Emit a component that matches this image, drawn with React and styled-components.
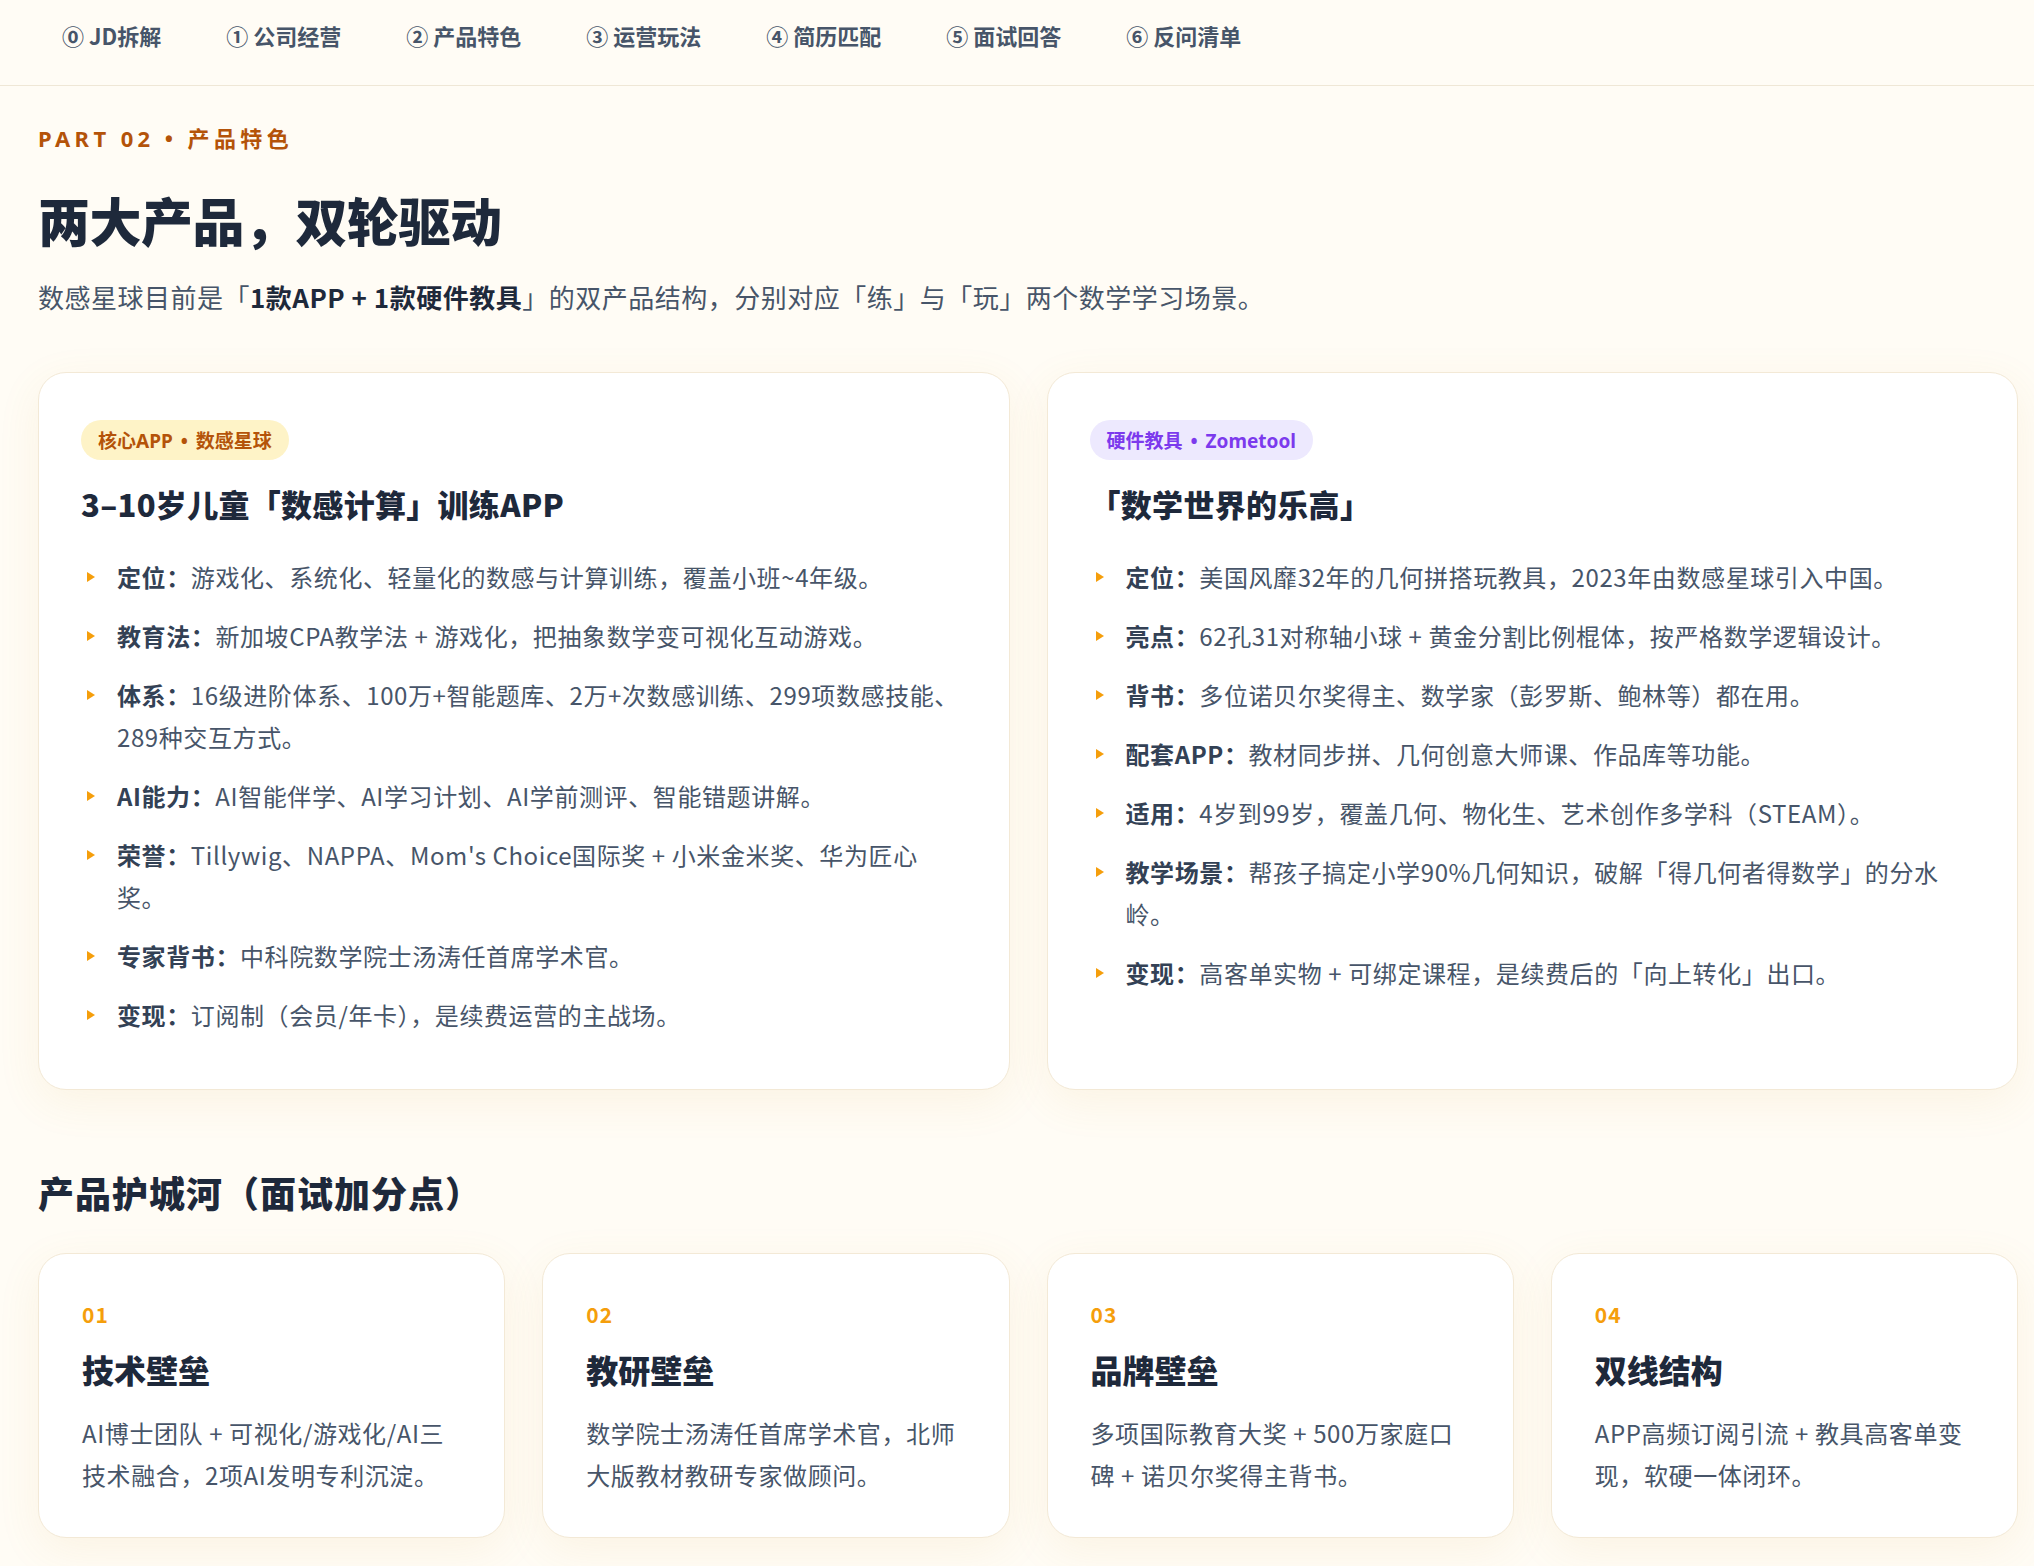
import styled, { createGlobalStyle } from 'styled-components';

const GlobalStyle = createGlobalStyle`
  * { box-sizing: border-box; }
  body {
    margin: 0;
    background: #fffcf5;
    font-family: "Noto Sans CJK SC", "Noto Sans", sans-serif;
    color: #1e293b;
  }
`

const Nav = styled.nav`
  display: flex;
  gap: 17px;
  padding: 18px 0 33px 38px;
  border-bottom: 1px solid #efe7d6;
`

const NavItem = styled.a`
  padding: 0 24px;
  font-size: 22px;
  line-height: 34px;
  font-weight: 700;
  color: #475569;
  text-decoration: none;
  white-space: nowrap;
  cursor: pointer;
`

const Main = styled.main`
  padding: 0 16px 60px 38px;
`

const Eyebrow = styled.div`
  margin-top: 37px;
  font-family: "Noto Sans", "Noto Sans CJK SC", sans-serif;
  font-size: 22px;
  line-height: 30px;
  font-weight: 700;
  letter-spacing: 4.4px;
  color: #b45309;
`

const Title = styled.h1`
  margin: 34px 0 0;
  font-size: 52px;
  line-height: 65px;
  font-weight: 900;
  letter-spacing: -0.5px;
  color: #1e293b;
`

const Lead = styled.p`
  margin: 24px 0 0;
  font-size: 26px;
  line-height: 42px;
  letter-spacing: 0.5px;
  color: #475569;
  b { color: #1e293b; font-weight: 700; }
`

const ProductGrid = styled.div`
  display: grid;
  grid-template-columns: 1fr 1fr;
  gap: 37px;
  margin-top: 54px;
`

const Card = styled.div`
  background: #fff;
  border: 1px solid #f3e9d6;
  border-radius: 28px;
  box-shadow: 0 12px 44px rgba(214, 160, 60, 0.09);
`

const ProductCard = styled(Card)`
  padding: 47px 42px 53px;
`

const Badge = styled.span`
  display: inline-flex;
  align-items: center;
  height: 40px;
  padding: 0 17px;
  border-radius: 20px;
  font-family: "Noto Sans", "Noto Sans CJK SC", sans-serif;
  font-size: 19px;
  font-weight: 700;
  word-spacing: 3px;
  background: ${p => p.$tone === 'purple' ? '#ede9fe' : '#fef3c7'};
  color: ${p => p.$tone === 'purple' ? '#7c3aed' : '#b45309'};
`

const CardTitle = styled.h3`
  margin: 22px 0 0;
  font-size: 31px;
  line-height: 44px;
  font-weight: 800;
  letter-spacing: 0.3px;
  color: #1e293b;
`

const List = styled.ul`
  list-style: none;
  margin: 30px 0 0;
  padding: 0;
  display: flex;
  flex-direction: column;
  gap: 17px;
`

const Item = styled.li`
  display: flex;
  font-size: 24px;
  line-height: 42px;
  letter-spacing: 0.6px;
  color: #475569;
  b { color: #334155; font-weight: 700; }
`

const Marker = styled.span`
  flex: 0 0 36px;
  height: 42px;
  display: flex;
  align-items: center;
  padding-left: 6px;
  &::after {
    content: '';
    border-left: 8px solid #f59e0b;
    border-top: 5px solid transparent;
    border-bottom: 5px solid transparent;
  }
`

const ItemText = styled.span`
  flex: 1;
`

const SectionTitle = styled.h2`
  margin: 79px 0 0;
  font-size: 36px;
  line-height: 47px;
  font-weight: 800;
  letter-spacing: 1px;
  color: #1e293b;
`

const MoatGrid = styled.div`
  display: grid;
  grid-template-columns: repeat(4, 1fr);
  gap: 37px;
  margin-top: 37px;
`

const MoatCard = styled(Card)`
  padding: 46px 43px 41px;
`

const MoatNum = styled.div`
  font-size: 21px;
  line-height: 28px;
  font-weight: 700;
  letter-spacing: 1px;
  color: #f59e0b;
`

const MoatTitle = styled.h4`
  margin: 19px 0 0;
  font-size: 32px;
  line-height: 44px;
  font-weight: 800;
  color: #1e293b;
`

const MoatDesc = styled.p`
  margin: 21px 0 0;
  font-size: 24px;
  line-height: 42px;
  letter-spacing: 0.6px;
  color: #475569;
`

const tabs = ['⓪ JD拆解', '① 公司经营', '② 产品特色', '③ 运营玩法', '④ 简历匹配', '⑤ 面试回答', '⑥ 反问清单']

const products = [
  {
    tone: 'amber',
    badge: '核心APP • 数感星球',
    title: '3–10岁儿童「数感计算」训练APP',
    items: [
      ['定位', '游戏化、系统化、轻量化的数感与计算训练，覆盖小班~4年级。'],
      ['教育法', '新加坡CPA教学法 + 游戏化，把抽象数学变可视化互动游戏。'],
      ['体系', '16级进阶体系、100万+智能题库、2万+次数感训练、299项数感技能、289种交互方式。'],
      ['AI能力', 'AI智能伴学、AI学习计划、AI学前测评、智能错题讲解。'],
      ['荣誉', 'Tillywig、NAPPA、Mom\'s Choice国际奖 + 小米金米奖、华为匠心奖。'],
      ['专家背书', '中科院数学院士汤涛任首席学术官。'],
      ['变现', '订阅制（会员/年卡），是续费运营的主战场。'],
    ],
  },
  {
    tone: 'purple',
    badge: '硬件教具 • Zometool',
    title: '「数学世界的乐高」',
    items: [
      ['定位', '美国风靡32年的几何拼搭玩教具，2023年由数感星球引入中国。'],
      ['亮点', '62孔31对称轴小球 + 黄金分割比例棍体，按严格数学逻辑设计。'],
      ['背书', '多位诺贝尔奖得主、数学家（彭罗斯、鲍林等）都在用。'],
      ['配套APP', '教材同步拼、几何创意大师课、作品库等功能。'],
      ['适用', '4岁到99岁，覆盖几何、物化生、艺术创作多学科（STEAM）。'],
      ['教学场景', '帮孩子搞定小学90%几何知识，破解「得几何者得数学」的分水岭。'],
      ['变现', '高客单实物 + 可绑定课程，是续费后的「向上转化」出口。'],
    ],
  },
]

const moats = [
  ['01', '技术壁垒', 'AI博士团队 + 可视化/游戏化/AI三技术融合，2项AI发明专利沉淀。'],
  ['02', '教研壁垒', '数学院士汤涛任首席学术官，北师大版教材教研专家做顾问。'],
  ['03', '品牌壁垒', '多项国际教育大奖 + 500万家庭口碑 + 诺贝尔奖得主背书。'],
  ['04', '双线结构', 'APP高频订阅引流 + 教具高客单变现，软硬一体闭环。'],
]

const App = () => {
  return (
    <>
      <GlobalStyle />
      <Nav>
        {tabs.map((t) => (
          <NavItem key={t}>{t}</NavItem>
        ))}
      </Nav>
      <Main>
        <Eyebrow>PART 02 • 产品特色</Eyebrow>
        <Title>两大产品，双轮驱动</Title>
        <Lead>
          数感星球目前是「<b>1款APP + 1款硬件教具</b>」的双产品结构，分别对应「练」与「玩」两个数学学习场景。
        </Lead>

        <ProductGrid>
          {products.map((p) => (
            <ProductCard key={p.badge}>
              <Badge $tone={p.tone}>{p.badge}</Badge>
              <CardTitle>{p.title}</CardTitle>
              <List>
                {p.items.map(([label, text]) => (
                  <Item key={label + text}>
                    <Marker />
                    <ItemText><b>{label}：</b>{text}</ItemText>
                  </Item>
                ))}
              </List>
            </ProductCard>
          ))}
        </ProductGrid>

        <SectionTitle>产品护城河（面试加分点）</SectionTitle>
        <MoatGrid>
          {moats.map(([num, title, desc]) => (
            <MoatCard key={num}>
              <MoatNum>{num}</MoatNum>
              <MoatTitle>{title}</MoatTitle>
              <MoatDesc>{desc}</MoatDesc>
            </MoatCard>
          ))}
        </MoatGrid>
      </Main>
    </>
  )
}

export default App
